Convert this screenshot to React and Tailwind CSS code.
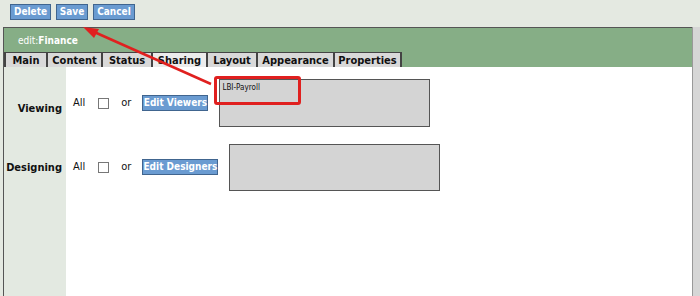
import React from "react";

const Btn = ({ children, w }) => (
  <div
    className={`h-[16px] ${w} flex items-center justify-center bg-[#6a9bd1] border border-[#40658f] text-white font-bold text-[10px] leading-none`}
  >
    {children}
  </div>
);

const tabs = [
  ["Main", "w-[42px]"],
  ["Content", "w-[55px]"],
  ["Status", "w-[50px]"],
  ["Sharing", "w-[55px]"],
  ["Layout", "w-[50px]"],
  ["Appearance", "w-[77px]"],
  ["Properties", "w-[67px]"],
];

export default function App() {
  return (
    <div
      className="relative w-[700px] h-[296px] overflow-hidden bg-[#e4e9e1] text-[#111]"
      style={{ fontFamily: "Tahoma, 'DejaVu Sans Condensed', 'Liberation Sans', sans-serif" }}
    >
      {/* toolbar */}
      <div className="h-[27px] flex items-start gap-[5px] pl-[10px] pt-[4px]">
        <Btn w="w-[41px]">Delete</Btn>
        <Btn w="w-[32px]">Save</Btn>
        <Btn w="w-[42px]">Cancel</Btn>
      </div>

      <div className="flex h-[269px]">
        {/* panel */}
        <div className="ml-[3px] w-[689px] flex flex-col border-l border-t border-[#555]">
          <div className="h-[24px] bg-[#86ae86] flex items-center pl-[14px] text-white text-[10px]">
            <span>edit:</span>
            <span className="font-bold">Finance</span>
          </div>
          <div className="h-[15px] bg-[#86ae86] flex">
            {tabs.map(([t, w]) => (
              <div
                key={t}
                className={`${w} h-[15px] flex items-center justify-center border-l-2 border-t border-[#444] text-[11px] font-bold leading-none ${
                  t === "Sharing" ? "bg-[#ececec]" : "bg-[#d9d9d9]"
                }`}
              >
                {t}
              </div>
            ))}
            <div className="w-[2px] h-[15px] bg-[#444]" />
          </div>

          {/* body */}
          <div className="flex flex-col flex-1">
            {/* viewing row */}
            <div className="flex h-[70px]">
              <div className="w-[62px] bg-[#e3e9e1] flex items-center justify-end pr-[4px] pt-[14px] text-[11px] font-bold">
                Viewing
              </div>
              <div className="flex-1 bg-white flex items-start pl-[7px] pt-[12px]">
                <div className="flex items-center h-[48px] text-[11px]">
                  <span>All</span>
                  <span className="ml-[13px] w-[11px] h-[11px] border border-[#777] bg-white" />
                  <span className="ml-[12px]">or</span>
                  <div className="ml-[11px]">
                    <Btn w="w-[66px]">Edit Viewers</Btn>
                  </div>
                  <div className="ml-[11px] w-[211px] h-[48px] bg-[#d4d4d4] border border-[#555] self-start pl-[2px] pt-[2px] text-[8px] leading-[11px]">
                    LBI-Payroll
                  </div>
                </div>
              </div>
            </div>
            {/* designing row */}
            <div className="flex h-[61px]">
              <div className="w-[62px] bg-[#e3e9e1] flex items-center justify-end pr-[4px] pt-[1px] text-[11px] font-bold">
                Designing
              </div>
              <div className="flex-1 bg-white flex items-center pl-[7px] pb-[1px]">
                <div className="flex items-center text-[11px]">
                  <span>All</span>
                  <span className="ml-[13px] w-[11px] h-[11px] border border-[#777] bg-white" />
                  <span className="ml-[12px]">or</span>
                  <div className="ml-[11px]">
                    <Btn w="w-[76px]">Edit Designers</Btn>
                  </div>
                  <div className="ml-[11px] w-[211px] h-[47px] bg-[#d4d4d4] border border-[#555]" />
                </div>
              </div>
            </div>
            {/* filler */}
            <div className="flex flex-1">
              <div className="w-[62px] bg-[#e3e9e1]" />
              <div className="flex-1 bg-white" />
            </div>
          </div>
        </div>
        {/* right gutter */}
        <div className="flex-1 border-l border-[#999] bg-[#d6d6d6]" />
      </div>

      {/* annotation: highlight box */}
      <div className="absolute left-[214px] top-[76px] w-[87px] h-[29px] border-[3px] border-[#e0201f] rounded-[3px]" />
      {/* annotation: arrow */}
      <svg className="absolute left-0 top-0" width="700" height="296" viewBox="0 0 700 296">
        <line x1="211" y1="84" x2="92" y2="31" stroke="#e0201f" strokeWidth="2.5" />
        <polygon points="83,27 99,29 94,38" fill="#e0201f" />
      </svg>
    </div>
  );
}
